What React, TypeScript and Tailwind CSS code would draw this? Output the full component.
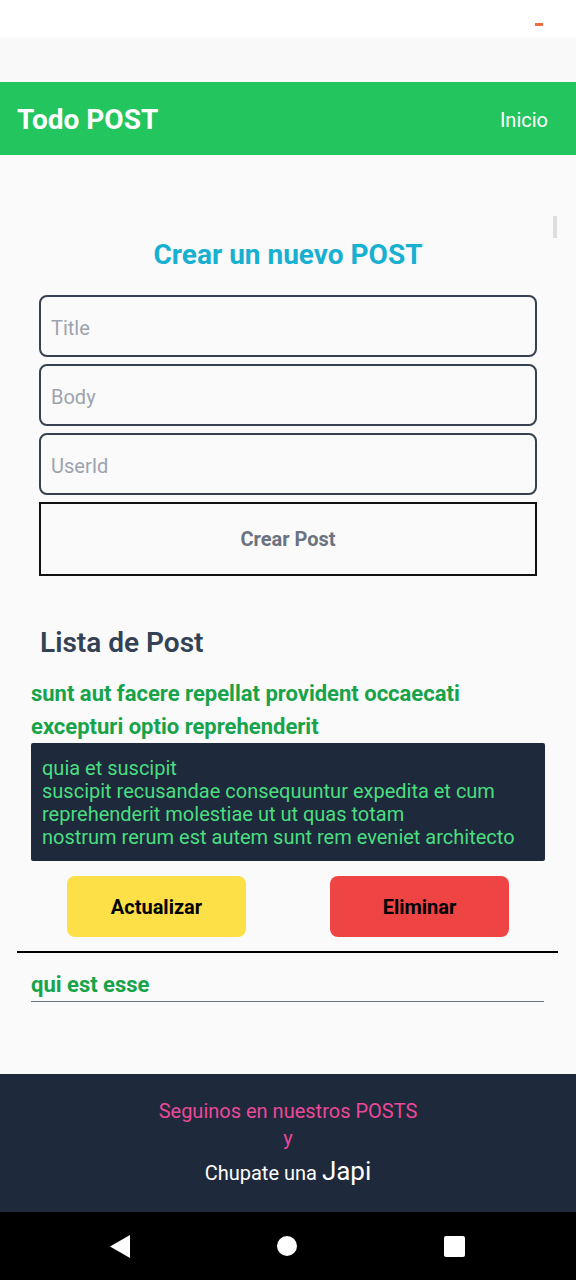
import React from "react";

export default function App() {
  return (
    <div className="w-[576px] h-[1280px] flex flex-col bg-[#fafafa] overflow-hidden" style={{ fontFamily: "Roboto, 'Liberation Sans', sans-serif" }}>
      {/* status bar */}
      <div className="h-[37px] bg-white flex justify-end pr-[33px] pt-[23px] shrink-0">
        <div className="w-[8px] h-[3px] bg-[#f26a3d]" />
      </div>
      <div className="h-[45px] bg-[#f9f9f9] shrink-0" />
      {/* header */}
      <div className="h-[73px] bg-[#22c55e] flex items-center justify-between pl-[17px] pr-[28px] shrink-0">
        <span className="text-white font-bold text-[28px] pt-[2px]">Todo POST</span>
        <span className="text-white text-[20px] pt-[2px]">Inicio</span>
      </div>
      {/* content */}
      <div className="relative flex-1 flex flex-col">
        <div className="absolute right-[19px] top-[61px] w-[4px] h-[22px] bg-[#dddddd]" />
        <h1 className="text-center text-[#18b0d0] font-bold text-[28px] mt-[84px] leading-[32px]">Crear un nuevo POST</h1>
        <div className="flex flex-col gap-[7px] px-[39px] mt-[24px]">
          {["Title", "Body", "UserId"].map((p) => (
            <div key={p} className="h-[62px] border-2 border-[#374151] rounded-[8px] flex items-center px-[10px] pt-[4px] text-[20px] text-[#9ca3af]">
              {p}
            </div>
          ))}
          <div className="h-[74px] border-2 border-[#111111] flex items-center justify-center text-[20px] font-bold text-[#6b7280]">
            Crear Post
          </div>
        </div>
        <h2 className="ml-[40px] mt-[51px] text-[28px] font-semibold text-[#334155] leading-[32px]">Lista de Post</h2>
        <div className="px-[31px] mt-[18px]">
          <p className="text-[#16a34a] font-bold text-[22px] leading-[33px]">
            sunt aut facere repellat provident occaecati excepturi optio reprehenderit
          </p>
          <div className="bg-[#1e293b] rounded-[2px] px-[11px] pt-[14px] pb-[12px] text-[#4ade80] text-[20px] leading-[23px] w-[514px]">
            quia et suscipit<br />
            suscipit recusandae consequuntur expedita et cum<br />
            reprehenderit molestiae ut ut quas totam<br />
            nostrum rerum est autem sunt rem eveniet architecto
          </div>
        </div>
        <div className="flex justify-between pl-[67px] pr-[67px] mt-[15px]">
          <div className="w-[179px] h-[61px] bg-[#fde047] rounded-[8px] flex items-center justify-center font-bold text-[20px] text-black">Actualizar</div>
          <div className="w-[179px] h-[61px] bg-[#ef4444] rounded-[8px] flex items-center justify-center font-bold text-[20px] text-black">Eliminar</div>
        </div>
        <div className="mx-[17px] mt-[14px] h-[2px] bg-black w-[541px]" />
        <div className="mx-[31px] mt-[19px] border-b border-[#6b7280] w-[513px] pb-[2px]">
          <span className="text-[#16a34a] font-bold text-[22px] leading-[26px]">qui est esse</span>
        </div>
      </div>
      {/* footer */}
      <div className="h-[138px] bg-[#1e293b] flex flex-col items-center pt-[25px] shrink-0">
        <span className="text-[#ec4899] text-[20px] leading-[24px]">Seguinos en nuestros POSTS</span>
        <span className="text-[#ec4899] text-[20px] leading-[30px]">y</span>
        <span className="text-white text-[20px] leading-[36px]">
          Chupate una <span className="text-[26px]">Japi</span>
        </span>
      </div>
      {/* nav bar */}
      <div className="h-[68px] bg-black flex items-center pl-[110px] gap-[147px] shrink-0">
        <svg width="20" height="23" viewBox="0 0 20 23"><path d="M20 0 L0 11.5 L20 23 Z" fill="white" /></svg>
        <div className="w-[20px] h-[20px] rounded-full bg-white" />
        <div className="w-[21px] h-[21px] rounded-[2px] bg-white" />
      </div>
    </div>
  );
}
